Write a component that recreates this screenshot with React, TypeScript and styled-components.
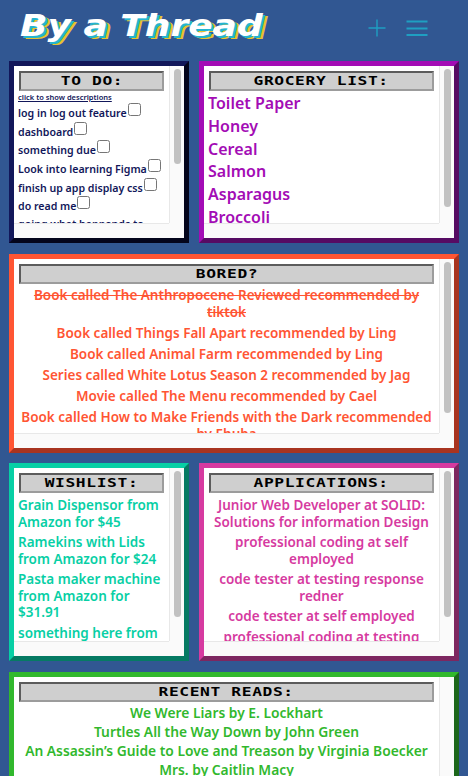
import styled, { createGlobalStyle } from "styled-components";

const todos = [
  "log in log out feature",
  "dashboard",
  "something due",
  "Look into learning Figma",
  "finish up app display css",
  "do read me",
  "going what happends to this one",
];

const groceries = ["Toilet Paper", "Honey", "Cereal", "Salmon", "Asparagus", "Broccoli"];

const bored = [
  "Book called Things Fall Apart recommended by Ling",
  "Book called Animal Farm recommended by Ling",
  "Series called White Lotus Season 2 recommended by Jag",
  "Movie called The Menu recommended by Cael",
  "Book called How to Make Friends with the Dark recommended by Ehuba",
];

const wishlist = [
  "Grain Dispensor from Amazon for $45",
  "Ramekins with Lids from Amazon for $24",
  "Pasta maker machine from Amazon for $31.91",
  "something here from Amazon for $1",
];

const applications = [
  "Junior Web Developer at SOLID: Solutions for information Design",
  "professional coding at self employed",
  "code tester at testing response redner",
  "code tester at self employed",
  "professional coding at testing",
];

const reads = [
  "We Were Liars by E. Lockhart",
  "Turtles All the Way Down by John Green",
  "An Assassin’s Guide to Love and Treason by Virginia Boecker",
  "Mrs. by Caitlin Macy",
];

type CardProps = {
  title: string;
  height: number;
  light: string;
  dark: string;
  thumb?: number;
  wide?: boolean;
  children: React.ReactNode;
};

const Card = ({ title, height, light, dark, thumb, wide, children }: CardProps) => (
  <Panel $height={height} $light={light} $dark={dark} $wide={wide}>
    <PanelBody>
      <PanelTitle>
        <TitleText>{title}</TitleText>
      </PanelTitle>
      {children}
    </PanelBody>
    <VerticalTrack>{thumb ? <Thumb $height={thumb} /> : null}</VerticalTrack>
    <HorizontalTrack />
    <TrackCorner />
  </Panel>
);

const App = () => {
  return (
    <>
      <GlobalStyle />
      <Page>
        <Header>
          <Title>By a Thread</Title>
          <HeaderIcons>
            <svg width="18" height="18" viewBox="0 0 18 18" fill="none" stroke="#1f9fc2" strokeWidth="1.4">
              <path d="M9 0.5V17.5M0.5 9H17.5" />
            </svg>
            <svg width="22" height="17" viewBox="0 0 22 17" fill="none" stroke="#1f9fc2" strokeWidth="2">
              <path d="M0.5 1.5H21.5M0.5 8.5H21.5M0.5 15H21.5" />
            </svg>
          </HeaderIcons>
        </Header>
        <Board>
          <Card title="TO DO:" height={182} light="#12175a" dark="#04051c" thumb={95}>
            <Hint>click to show descriptions</Hint>
            {todos.map((todo) => (
              <TodoRow key={todo}>
                {todo}
                <TodoCheck type="checkbox" />
              </TodoRow>
            ))}
          </Card>
          <Card title="GROCERY LIST:" height={182} light="#a30cb5" dark="#560b63" thumb={138}>
            <GroceryList>
              {groceries.map((item) => (
                <GroceryRow key={item}>{item}</GroceryRow>
              ))}
            </GroceryList>
          </Card>
          <Card title="BORED?" wide height={199} light="#ff5533" dark="#a83420" thumb={151}>
            <BoredList>
              <BoredRow $done>Book called The Anthropocene Reviewed recommended by tiktok</BoredRow>
              {bored.map((item) => (
                <BoredRow key={item}>{item}</BoredRow>
              ))}
            </BoredList>
          </Card>
          <Card title="WISHLIST:" height={198} light="#07cfa5" dark="#067a63" thumb={146}>
            <Stack>
              {wishlist.map((item) => (
                <WishRow key={item}>{item}</WishRow>
              ))}
            </Stack>
          </Card>
          <Card title="APPLICATIONS:" height={198} light="#d63aa0" dark="#7d2760" thumb={146}>
            <Stack>
              {applications.map((item) => (
                <ApplicationRow key={item}>{item}</ApplicationRow>
              ))}
            </Stack>
          </Card>
          <Card title="RECENT READS:" wide height={150} light="#31b82d" dark="#1c661a">
            <ReadList>
              {reads.map((item) => (
                <ReadRow key={item}>{item}</ReadRow>
              ))}
            </ReadList>
          </Card>
        </Board>
      </Page>
    </>
  );
};

export default App;

const GlobalStyle = createGlobalStyle`
  html, body {
    margin: 0;
    height: 776px;
    overflow: hidden;
    background: #315792;
  }
  * {
    box-sizing: border-box;
  }
`;

const Page = styled.div`
  width: 468px;
  padding: 0 9px;
  font-family: "Noto Sans", sans-serif;
`;

const Header = styled.header`
  height: 61px;
  display: flex;
  align-items: flex-start;
  justify-content: space-between;
  padding: 8px 31px 0 11px;
`;

const Title = styled.h1`
  margin: 0;
  font-family: "DejaVu Sans", sans-serif;
  font-size: 30px;
  font-weight: 700;
  font-style: oblique;
  line-height: 36px;
  white-space: nowrap;
  color: #fff;
  text-shadow: 2px 1.5px 0 #24b4cf, 4px 3px 0 #e8c22f;
  transform: scaleX(1.2);
  transform-origin: left center;
`;

const HeaderIcons = styled.div`
  display: flex;
  align-items: center;
  gap: 20px;
  margin-top: 11px;
`;

const Board = styled.main`
  display: grid;
  grid-template-columns: 180px 260px;
  gap: 10.5px 10px;
`;

const Panel = styled.section<{ $height: number; $light: string; $dark: string; $wide?: boolean }>`
  grid-column: ${({ $wide }) => ($wide ? "1 / -1" : "auto")};
  height: ${({ $height }) => $height}px;
  display: grid;
  grid-template-columns: minmax(0, 1fr) 15px;
  grid-template-rows: minmax(0, 1fr) 15px;
  border: 5px solid;
  border-color: ${({ $light, $dark }) => `${$light} ${$dark} ${$dark} ${$light}`};
  background: #fff;
`;

const PanelBody = styled.div`
  overflow: hidden;
  padding: 5px 5px 0;
`;

const VerticalTrack = styled.div`
  padding: 3px 3px 0 4px;
  border-left: 1px solid #e8e8e8;
  background: #fafafa;
`;

const HorizontalTrack = styled.div`
  border-top: 1px solid #e8e8e8;
  background: #fafafa;
`;

const TrackCorner = styled.div`
  background: #fafafa;
`;

const Thumb = styled.div<{ $height: number }>`
  height: ${({ $height }) => $height}px;
  border-radius: 4px;
  background: #c1c1c1;
`;

const PanelTitle = styled.h2`
  height: 20px;
  margin: 0;
  border: 2px solid;
  border-color: #5c5c5c #9c9c9c #9c9c9c #5c5c5c;
  background: #cfcfcf;
  font-family: "DejaVu Sans Mono", monospace;
  font-size: 13px;
  font-weight: 700;
  line-height: 16px;
  text-align: center;
  color: #000;
`;

const TitleText = styled.span`
  display: inline-block;
  letter-spacing: 0.5px;
  white-space: nowrap;
  transform: scaleX(1.25);
`;

const Hint = styled.div`
  margin: 0 0 0 -1px;
  font-size: 7.5px;
  line-height: 12px;
  font-weight: 600;
  text-decoration: underline;
  color: #12175a;
`;

const TodoRow = styled.div`
  height: 18.7px;
  margin-left: -1px;
  font-size: 10.6px;
  line-height: 19px;
  font-weight: 600;
  color: #12175a;
`;

const TodoCheck = styled.input`
  width: 13px;
  height: 13px;
  margin: 0 0 0 1px;
  vertical-align: 1px;
`;

const GroceryList = styled.div`
  margin: 1px 0 0 -1px;
`;

const GroceryRow = styled.div`
  font-size: 16px;
  line-height: 22.8px;
  font-weight: 600;
  color: #a30cb5;
`;

const Stack = styled.div`
  display: flex;
  flex-direction: column;
  gap: 4px;
  margin-top: 4px;
`;

const BoredList = styled.div`
  display: flex;
  flex-direction: column;
  gap: 4px;
  margin: 3px -4px 0;
`;

const BoredRow = styled.div<{ $done?: boolean }>`
  font-size: 13.5px;
  line-height: 17px;
  font-weight: 600;
  text-align: center;
  color: #ff5533;
  text-decoration: ${({ $done }) => ($done ? "line-through" : "none")};
`;

const WishRow = styled.div`
  margin-left: -1px;
  font-size: 13.5px;
  line-height: 16.5px;
  font-weight: 600;
  color: #07cfa5;
`;

const ApplicationRow = styled.div`
  font-size: 13.5px;
  line-height: 16.5px;
  font-weight: 600;
  text-align: center;
  color: #d63aa0;
`;

const ReadList = styled.div`
  margin-top: 1px;
`;

const ReadRow = styled.div`
  font-size: 13.8px;
  line-height: 19px;
  font-weight: 600;
  text-align: center;
  color: #31b82d;
`;
